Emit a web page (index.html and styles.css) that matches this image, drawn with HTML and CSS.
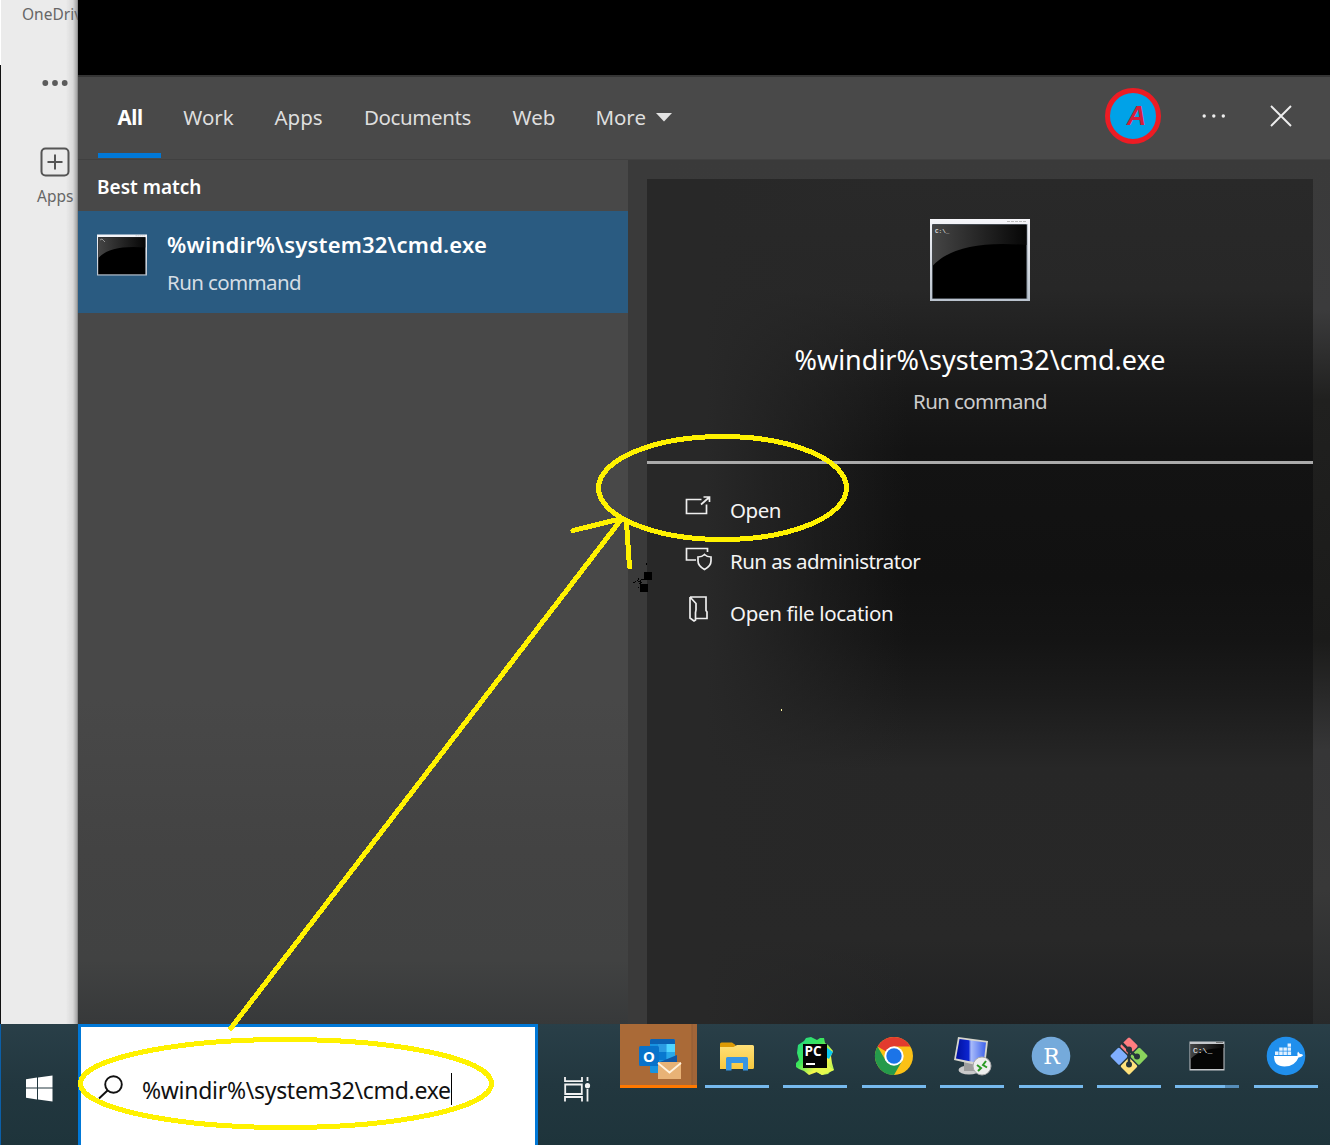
FILE: index.html
```html
<!DOCTYPE html>
<html lang="en">
<head>
<meta charset="utf-8">
<title>Search</title>
<link rel="stylesheet" href="styles.css">
</head>
<body>
<svg class="defs" width="0" height="0">
  <defs>
    <linearGradient id="glass" x1="0" x2="1"><stop offset="0" stop-color="#454545"/><stop offset="1" stop-color="#060606"/></linearGradient>
    <linearGradient id="frame" x1="0" y1="0" x2="0" y2="1"><stop offset="0" stop-color="#f6f6fa"/><stop offset="1" stop-color="#b9c2cd"/></linearGradient>
    <linearGradient id="screen" x1="0" x2="1"><stop offset="0" stop-color="#0010a0"/><stop offset=".42" stop-color="#0c25d0"/><stop offset=".5" stop-color="#a9bcfa"/><stop offset="1" stop-color="#3f62ec"/></linearGradient>
    <linearGradient id="charm" x1="0" x2="1" y1="0" y2="1"><stop offset="0" stop-color="#21d789"/><stop offset=".4" stop-color="#3ce65a"/><stop offset=".7" stop-color="#fcf84a"/><stop offset="1" stop-color="#8ef05a"/></linearGradient>
    <linearGradient id="folder" x1="0" x2="0" y1="0" y2="1"><stop offset="0" stop-color="#ffe078"/><stop offset="1" stop-color="#f8c83e"/></linearGradient>
    <symbol id="console" viewBox="0 0 100 82">
      <rect width="100" height="82" fill="url(#frame)"/>
      <rect x="2" y="5" width="95.500" height="75" fill="#8b97a3"/>
      <rect x="2.500" y="5.500" width="94" height="74" fill="#000"/>
      <path d="M2.500 6H96.500V26Q27 20 2.500 47Z" fill="url(#glass)"/>
      <path d="M77 2.500h19" stroke="#bbb" stroke-width="1.200" stroke-dasharray="3 1"/>
    </symbol>
  </defs>
</svg>
<div class="desktop">
  <main class="upper">
    <aside class="rail">
      <div class="rail-label rail-drive">OneDrive</div>
      <svg class="rail-dots" width="26" height="8" fill="#5b5b5b"><circle cx="3.300" cy="4" r="2.900"/><circle cx="13" cy="4" r="2.900"/><circle cx="22.700" cy="4" r="2.900"/></svg>
      <svg class="rail-plus" width="30" height="30" fill="none" stroke="#555" stroke-width="2"><rect x="1.500" y="1.500" width="27" height="27" rx="4"/><path d="M15 7.500v15M7.500 15h15"/></svg>
      <div class="rail-label rail-apps">Apps</div>
    </aside>
    <section class="flyout">
      <div class="blackout"></div>
      <header class="tabs">
        <div class="tab tab-all"><span>All</span></div>
        <div class="tab tab-work">Work</div>
        <div class="tab tab-apps">Apps</div>
        <div class="tab tab-docs"><span>Documents</span></div>
        <div class="tab tab-web">Web</div>
        <div class="tab tab-more">More <svg width="16" height="9"><path d="M0 0h16L8 8.500Z" fill="#e4e4e4"/></svg></div>
        <div class="tools">
          <div class="avatar">A</div>
          <svg width="24" height="6" fill="#eee"><circle cx="2.200" cy="3" r="1.700"/><circle cx="11.800" cy="3" r="1.700"/><circle cx="21.300" cy="3" r="1.700"/></svg>
          <svg class="close" width="22" height="22"><path d="M1 1 21 21M21 1 1 21" stroke="#eee" stroke-width="1.900"/></svg>
        </div>
      </header>
      <div class="panes">
        <div class="results">
          <div class="heading">Best match</div>
          <div class="hit">
            <svg class="hit-icon" width="50" height="42"><use href="#console" width="50" height="42"/><path d="M3 6l2-1M5 5l3 3" stroke="#bbb" stroke-width=".7"/></svg>
            <div>
              <div class="hit-name">%windir%\system32\cmd.exe</div>
              <div class="hit-kind">Run command</div>
            </div>
          </div>
        </div>
        <div class="detail">
          <div class="card">
            <div class="summary">
              <svg class="big-icon" width="100" height="82"><use href="#console" width="100" height="82"/><text x="5" y="14" class="prompt">C:\_</text></svg>
              <div class="big-name">%windir%\system32\cmd.exe</div>
              <div class="big-kind">Run command</div>
            </div>
            <div class="actions">
              <div class="action"><svg width="28" height="28" viewBox="0 0 28 28"><path d="M16.500 6.500H1.500v14h20v-9M16 11.500 24 4.500M18.500 4H24.500v5"/></svg><span class="act-open">Open</span></div>
              <div class="action"><svg width="28" height="28" viewBox="0 0 28 28"><path d="M11 16H1.500V4.500h21V8M13 13q4 0 6.500-2.500Q22 13 26 13v4q0 5-6.500 8.500Q13 22 13 17Z"/></svg><span class="act-admin">Run as administrator</span></div>
              <div class="action"><svg width="28" height="28" viewBox="0 0 28 28"><path d="M5 1H21V14.500L22 16V22.500H10.500M5 1V22L9 25 10.500 24V16.500L11 14V7.500L5 1"/></svg><span class="act-loc">Open file location</span></div>
            </div>
          </div>
        </div>
      </div>
    </section>
  </main>
  <footer class="taskbar">
    <div class="start"><svg width="27" height="27" fill="#fff"><path d="M0 4.200 11 2.500V12.500H0ZM12 2.400 26.500.5v12H12ZM0 13.500H11V24.500L0 22.800ZM12 13.500H26.500v13L12 24.600Z"/></svg></div>
    <div class="search">
      <svg width="26" height="25" fill="none" stroke="#111" stroke-width="1.900"><circle cx="15.500" cy="9.500" r="8.300"/><path d="M9.500 15.500 1 23.500"/></svg>
      <span class="query">%windir%\system32\cmd.exe</span><i class="caret"></i>
    </div>
    <div class="taskview"><svg width="27" height="25" fill="none" stroke="#f2f2f2" stroke-width="1.800"><path d="M1 0v4.200H18V0M1 24.500V20H18v4.500M1.200 7.500H17.800v9.500H1.200ZM23.500 0v4M23.500 12v12.500"/><circle cx="23.500" cy="8.700" r="2.600" fill="#f2f2f2" stroke="none"/></svg></div>
    <div class="app outlook">
      <svg width="44" height="42" viewBox="0 0 44 42">
        <rect x="11" y="1" width="25" height="34" rx="1.500" fill="#1793e0"/><path d="M11 6V2.500Q11 1 12.500 1h22Q36 1 36 2.500V6Z" fill="#0b62b4"/><path d="M19 6h8.500v8H19Z" fill="#2b9be2"/><path d="M27.500 6H36v8h-8.500Z" fill="#50d5ff"/><path d="M19 14h8.500v8H19Z" fill="#0878cf"/><path d="M27.500 14H36v7h-8.500Z" fill="#28a8ea"/><path d="M11 28 38 17v7H11Z" fill="#1157a5"/>
        <rect y="8" width="20" height="20" rx="1.500" fill="#0872ca"/><text x="10" y="23.500" text-anchor="middle" class="glyph-o">O</text>
        <rect x="19" y="24" width="23" height="17" fill="#e8b276"/><path d="M19 25 30.500 34.500 42 25" fill="none" stroke="#fff2df" stroke-width="1.800"/>
      </svg>
    </div>
    <div class="app"><svg width="36" height="40" viewBox="0 0 36 40"><path d="M1 8Q1 6.500 2.500 6.500H13l3.500 2.500V14H1Z" fill="#dd9a05"/><path d="M1 11H14.500L18 9H33.500Q35 9 35 10.500V31.500Q35 33 33.500 33H1Z" fill="url(#folder)"/><path d="M7 34.500V22.500Q7 21 8.500 21H27.500Q29 21 29 22.500V34.500H24V27H12.500v7.500Z" fill="#3795e3"/></svg></div>
    <div class="app"><svg width="40" height="40" viewBox="0 0 40 40"><path d="M3 9 9 5 11 2 16 1 22 4 25 2 29 2 30 7 33 9 38 15 36 20 37 27 39 34 35 36 33 38 27 39 22 36 14 39 9 35 4 33 1 31 1 27 4 24 2 17Z" fill="url(#charm)"/><path d="M31 11l7 5-4 7-7-4Z" fill="#0bc7f0"/><path d="M30 27l9 7-12 5-9-5Z" fill="#e6fa4d"/><rect x="8" y="8" width="24" height="24" fill="#050505"/><text x="9.500" y="20" class="glyph-pc">PC</text><path d="M11 28h9" stroke="#fff" stroke-width="2"/></svg></div>
    <div class="app"><svg width="40" height="40" viewBox="0 0 40 40"><circle cx="20" cy="20" r="19" fill="#fbc116"/><path d="M20 20 3.500 10.500A19 19 0 0 1 36.500 10.500H20Z" fill="#e23b2e"/><path d="M3.500 10.500A19 19 0 0 0 20 39L28.200 24.700 20 20 11.800 24.700Z" fill="#259a4b"/><circle cx="20" cy="20" r="9.700" fill="#fff"/><circle cx="20" cy="20" r="7.700" fill="#1b74e8"/></svg></div>
    <div class="app"><svg width="40" height="40" viewBox="0 0 40 40"><ellipse cx="17" cy="34" rx="10.500" ry="4.500" fill="#c9c9c9"/><path d="M12 26h11v9H12Z" fill="#9d9d9d"/><path d="M6 1 36 5 33 31 2 24Z" fill="#d7d6ce"/><path d="M7.500 3 34 6.500 31.500 28 4 22.500Z" fill="url(#screen)"/><circle cx="30" cy="30" r="9" fill="#eee" stroke="#aaa"/><path d="M25 29l4 3-3 3M34 25l-3 4 4 2.500" fill="none" stroke="#2b9a23" stroke-width="2"/></svg></div>
    <div class="app"><svg width="40" height="40" viewBox="0 0 40 40"><circle cx="20" cy="20" r="19.300" fill="#75aadb"/><text x="20.500" y="27.500" text-anchor="middle" class="glyph-r">R</text></svg></div>
    <div class="app"><svg width="40" height="40" viewBox="0 0 40 40"><g transform="rotate(45 20 20)"><rect x="6.500" y="6.500" width="13" height="13" rx="1.500" fill="#ff7d80"/><rect x="21" y="6.500" width="12.500" height="13" rx="1.500" fill="#8bd45d"/><rect x="6.500" y="21" width="13" height="12.500" rx="1.500" fill="#7faeff"/><rect x="21" y="21" width="12.500" height="12.500" rx="1.500" fill="#ffe27b"/></g><path d="M12 6 20 14V29M20 14l8 7" fill="none" stroke="#26353b" stroke-width="2.500"/><circle cx="20" cy="13.500" r="3" fill="#26353b"/><circle cx="28" cy="20.500" r="3" fill="#26353b"/><circle cx="20" cy="28.500" r="3" fill="#26353b"/></svg></div>
    <div class="app app-cmd"><svg width="36" height="40" viewBox="0 0 36 40"><rect x=".5" y="5.500" width="35" height="29" fill="#c5c8cc"/><rect x="1.500" y="8" width="33" height="25" fill="#050505"/><path d="M1.500 8h33v4Q12 12 1.500 23Z" fill="url(#glass)"/><text x="4" y="16.500" class="prompt-sm">C:\_</text><path d="M27 6.500h7" stroke="#777"/></svg></div>
    <div class="app"><svg width="40" height="40" viewBox="0 0 40 40"><circle cx="20" cy="20" r="19.300" fill="#208fec"/><path d="M8 20H31.500Q31 17 32 15.500L34 18Q37 17.500 37 19.500 35 21.500 32.500 21.500 29 30.500 18.500 30.500 8 30.500 8 20Z" fill="#fff"/><path d="M9 15.500h3.500v3.500H9Zm4.200 0h3.500v3.500h-3.500Zm4.200 0h3.500v3.500h-3.500Zm4.200 0h3.500v3.500h-3.500ZM13.200 11.500h3.500v3.300h-3.500Zm4.200 0h3.500v3.300h-3.500Zm4.200 0H25v3.300h-3.400Zm0-4H25v3.300h-3.400Z" fill="#e2f1ff"/></svg></div>
  </footer>
  <svg class="ink" width="1330" height="1145">
    <g fill="none" stroke="#fff200" stroke-width="5" shape-rendering="crispEdges" stroke-linecap="round">
      <ellipse cx="722.500" cy="488" rx="124" ry="51.500"/>
      <ellipse cx="286" cy="1083.500" rx="205.500" ry="44"/>
      <path d="M231 1028 620 521M573 530.500 622 518.500M626.500 522 629.500 567"/>
    </g>
    <path d="M644 572h8v8h-8zM640 584h8v8h-8zM633 582h2v1h-2zM635 581h1v1h-1zM637 580h1v1h-1zM638 581h2v1h-2zM638 578h1v2h-1zM640 580h1v4h-1zM641 579h3v1h-3zM639 583h1v1h-1zM638 587h1v1h-1zM641 582h1v1h-1zM646 563h1v2h-1z" fill="#000"/>
    <path d="M781 709h1v2h-1z" fill="#fff6a0"/>
  </svg>
</div>
</body>
</html>
```
FILE: styles.css
```css
* { box-sizing: border-box; }
body { margin: 0; font-family: "Noto Sans", "Open Sans", sans-serif; background: #000; }
svg { display: block; flex: none; }
.defs { position: absolute; }
.desktop { position: relative; width: 1330px; height: 1145px; overflow: hidden; display: grid; grid-template-rows: 1024px 121px; white-space: nowrap; }
.upper { display: grid; grid-template-columns: 78px 1252px; }

.rail { overflow: hidden; border-left: 1px solid; border-image: linear-gradient(#fff 66px, #111 66px) 1; background: linear-gradient(90deg, transparent 65px, #d8d8d8 72px, #a5a5a5 76px, #777 77px), #ebebeb; display: flex; flex-direction: column; }
.rail-label { color: #666; font-size: 15.5px; line-height: 20px; }
.rail-drive { margin: 4px 0 0 21px; }
.rail-dots { margin: 55px 0 0 41px; }
.rail-plus { margin: 60px 0 0 39px; }
.rail-apps { margin: 9px 0 0 36px; }

.flyout { display: grid; grid-template-rows: 75px 85px 864px; background: linear-gradient(#484848 0, #484848 700px, #434343 850px, #414242 960px, #37393a 1024px); }
.blackout { background: #000; }
.tabs { display: flex; padding-left: 20px; border-top: 2px solid #353535; border-bottom: 1px solid #404040; background: #494949; color: #dedede; font-size: 20.5px; line-height: 80px; }
.tab { text-align: center; }
.tab-all { width: 63px; border-bottom: 5px solid #0078d7; color: #fff; font-weight: 700; margin-bottom: 1px; padding-left: 1px; letter-spacing: -.4px; }
.tab-work { width: 95px; }
.tab-apps { width: 85px; }
.tab-docs { width: 153px; letter-spacing: -.4px; }
.tab-web { width: 80px; }
.tab-more { width: 98px; height: 80px; display: flex; align-items: center; justify-content: flex-end; gap: 10px; }
.tools { margin-left: auto; padding-right: 38px; display: flex; align-items: center; padding-bottom: 5px; }
.avatar { width: 56px; height: 56px; margin-right: 41px; border: 5px solid #ed1c24; border-radius: 50%; background: #00a2e8; color: #d51d3b; font: italic 700 27px/47px "Liberation Sans", sans-serif; text-align: center; padding-left: 7px; }
.close { margin-left: 44px; }

.panes { display: grid; grid-template-columns: 550px 702px; }
.heading { height: 51px; padding-left: 19px; color: #fff; font-size: 19px; font-weight: 600; line-height: 54px; }
.hit { height: 102px; padding: 14px 0 0 19px; display: flex; gap: 20px; background: #2a5b81; }
.hit-icon { margin-top: 9px; }
.hit-name { color: #fff; font-size: 22px; font-weight: 600; line-height: 38px; letter-spacing: .2px; }
.hit-kind { color: #d5dde4; font-size: 20.5px; line-height: 38px; letter-spacing: -.62px; }
.detail { padding: 19px 17px 0 19px; background: linear-gradient(90deg, #3a3a3a 30px, transparent 300px), linear-gradient(#3a3a3a 0, #3b3b3c 150px, #20201f 240px, #1b1b1a 480px, #363637 590px, #383838 730px, #282a2b 864px); }
.card { height: 845px; background: linear-gradient(90deg, #282828 60px, transparent 260px), linear-gradient(#292929 0, #272727 110px, #191919 210px, #131313 270px, #111 400px, #141414 460px, #1b1b1b 515px, #272727 590px, #282828 760px, #202122 845px); }
.summary { height: 285px; border-bottom: 3px solid #aaa; padding-top: 40px; display: flex; flex-direction: column; align-items: center; }
.big-icon { margin-left: -1px; }
.big-name { margin-top: 39px; color: #fff; font-size: 27px; line-height: 40px; }
.big-kind { margin-top: 1px; color: #ccc; font-size: 20.5px; line-height: 40px; letter-spacing: -.62px; }
.actions { padding: 22px 0 0 38px; }
.action { height: 51.4px; display: flex; align-items: flex-start; gap: 17px; color: #f4f4f4; font-size: 20.5px; line-height: 48px; }
.action svg { margin-top: 7px; fill: none; stroke: #eee; stroke-width: 1.7; }
.act-open { letter-spacing: -.45px; }
.act-admin { letter-spacing: -.57px; }
.act-loc { letter-spacing: -.34px; }
.prompt { fill: #ddd; font: 700 6px "Liberation Mono", monospace; }

.taskbar { display: flex; background: linear-gradient(#293f48, #22373f 60px, #1e343b); border-left: 1px solid #0b5fa8; }
.start { width: 77px; padding: 51px 0 0 25px; }
.search { width: 460px; border: 3px solid #0078d7; border-bottom: 0; background: #fff; display: flex; padding: 48px 0 0 17px; }
.query { margin: -4px 0 0 18px; font-size: 23px; line-height: 38px; color: #111; letter-spacing: -.29px; }
.caret { width: 1.5px; height: 32px; margin-top: -2px; background: #000; }
.taskview { width: 82px; padding: 53px 0 0 26px; }
.app { width: 78.4px; height: 64px; position: relative; display: flex; justify-content: center; padding-top: 12px; }
.app::after { content: ""; position: absolute; left: 7.2px; bottom: 0; width: 64px; height: 3px; background: #76b9ed; }
.outlook { width: 77px; margin-right: .8px; padding: 14px 0 0 4px; background: linear-gradient(90deg, #aa6a37 71px, #925c34 72px, #a26538 73px); }
.outlook::after { left: 0; width: 77px; background: #ff7800; }
.app-cmd::after { background: linear-gradient(90deg, #76b9ed 50px, #568db9 50px); }
.glyph-o { fill: #fff; font: 700 15px "Noto Sans", sans-serif; }
.glyph-pc { fill: #fff; font: 700 13.5px "Open Sans", sans-serif; }
.glyph-r { fill: #fff; font: 22px "DejaVu Serif", serif; }
.prompt-sm { fill: #fff; font: 8px "Liberation Mono", monospace; }
.ink { position: absolute; inset: 0; pointer-events: none; }
```
